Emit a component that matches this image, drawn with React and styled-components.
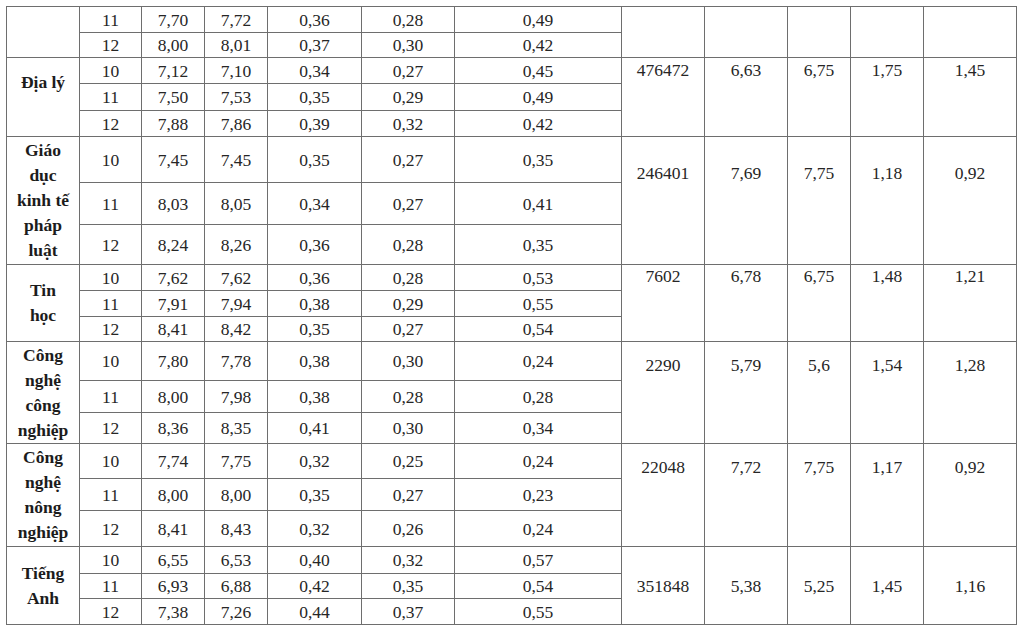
import React from "react";
import styled, { createGlobalStyle } from "styled-components";

const SERIF = `"Liberation Serif", "Times New Roman", Times, serif`;

const Global = createGlobalStyle`
  html, body { margin: 0; padding: 0; background: #fff; }
  body { font-family: ${SERIF}; color: #222; }
`;

const Page = styled.div`
  padding: 6px 0 0 6px;
  width: 1024px;
  height: 630px;
  box-sizing: border-box;
  overflow: hidden;
  background: #fff;
`;

const colWidths = [72, 61, 62, 62, 93, 92, 166, 82, 82, 62, 72, 92];

const Grid = styled.div`
  display: grid;
  grid-template-columns: ${colWidths.map((w) => `${w}px`).join(" ")};
  grid-template-rows: ${(p) => p.$rows.map((h) => `${h}px`).join(" ")};
  gap: 1px;
  padding: 1px;
  width: max-content;
  background: #6e6e6e;
`;

const Cell = styled.div`
  background: #fff;
  display: flex;
  align-items: center;
  justify-content: center;
  font-family: ${SERIF};
  font-size: 17.5px;
  line-height: 22px;
  color: #262626;
  white-space: nowrap;
`;

const Subject = styled(Cell)`
  grid-row: span ${(p) => p.$span};
  flex-direction: column;
  justify-content: ${(p) => (p.$top ? "flex-start" : "center")};
  padding-top: ${(p) => p.$pt || 0}px;
  font-weight: bold;
  line-height: 25px;
  color: #1c1c1c;
`;

const Stat = styled(Cell)`
  grid-row: span ${(p) => p.$span};
  align-items: ${(p) => (p.$middle ? "center" : "flex-start")};
  padding-top: ${(p) => p.$pt || 0}px;
`;

const groups = [
  {
    subject: [],
    rows: [
      ["11", "7,70", "7,72", "0,36", "0,28", "0,49"],
      ["12", "8,00", "8,01", "0,37", "0,30", "0,42"],
    ],
    heights: [25, 24],
    stats: ["", "", "", "", ""],
  },
  {
    subject: ["Địa lý"],
    sTop: true,
    sPt: 12,
    rows: [
      ["10", "7,12", "7,10", "0,34", "0,27", "0,45"],
      ["11", "7,50", "7,53", "0,35", "0,29", "0,49"],
      ["12", "7,88", "7,86", "0,39", "0,32", "0,42"],
    ],
    heights: [25, 26, 25],
    stats: ["476472", "6,63", "6,75", "1,75", "1,45"],
    pt: 1,
  },
  {
    subject: ["Giáo", "dục", "kinh tế", "pháp", "luật"],
    rows: [
      ["10", "7,45", "7,45", "0,35", "0,27", "0,35"],
      ["11", "8,03", "8,05", "0,34", "0,27", "0,41"],
      ["12", "8,24", "8,26", "0,36", "0,28", "0,35"],
    ],
    heights: [45, 41, 39],
    stats: ["246401", "7,69", "7,75", "1,18", "0,92"],
    pt: 25,
  },
  {
    subject: ["Tin", "học"],
    rows: [
      ["10", "7,62", "7,62", "0,36", "0,28", "0,53"],
      ["11", "7,91", "7,94", "0,38", "0,29", "0,55"],
      ["12", "8,41", "8,42", "0,35", "0,27", "0,54"],
    ],
    heights: [25, 25, 24],
    stats: ["7602", "6,78", "6,75", "1,48", "1,21"],
    pt: 0,
  },
  {
    subject: ["Công", "nghệ", "công", "nghiệp"],
    rows: [
      ["10", "7,80", "7,78", "0,38", "0,30", "0,24"],
      ["11", "8,00", "7,98", "0,38", "0,28", "0,28"],
      ["12", "8,36", "8,35", "0,41", "0,30", "0,34"],
    ],
    heights: [38, 31, 30],
    stats: ["2290", "5,79", "5,6", "1,54", "1,28"],
    pt: 12,
  },
  {
    subject: ["Công", "nghệ", "nông", "nghiệp"],
    rows: [
      ["10", "7,74", "7,75", "0,32", "0,25", "0,24"],
      ["11", "8,00", "8,00", "0,35", "0,27", "0,23"],
      ["12", "8,41", "8,43", "0,32", "0,26", "0,24"],
    ],
    heights: [34, 31, 35],
    stats: ["22048", "7,72", "7,75", "1,17", "0,92"],
    pt: 12,
  },
  {
    subject: ["Tiếng", "Anh"],
    rows: [
      ["10", "6,55", "6,53", "0,40", "0,32", "0,57"],
      ["11", "6,93", "6,88", "0,42", "0,35", "0,54"],
      ["12", "7,38", "7,26", "0,44", "0,37", "0,55"],
    ],
    heights: [26, 24, 25],
    stats: ["351848", "5,38", "5,25", "1,45", "1,16"],
    middle: true,
    pt: 0,
  },
];

const rowHeights = groups.flatMap((g) => g.heights);

export default function App() {
  return (
    <Page>
      <Global />
      <Grid $rows={rowHeights}>
        {groups.map((g, gi) =>
          g.rows.map((r, ri) => (
            <React.Fragment key={`${gi}-${ri}`}>
              {ri === 0 && (
                <Subject $span={g.rows.length} $top={g.sTop} $pt={g.sPt}>
                  {g.subject.map((line, li) => (
                    <span key={li}>{line}</span>
                  ))}
                </Subject>
              )}
              {r.map((v, vi) => (
                <Cell key={vi}>{v}</Cell>
              ))}
              {ri === 0 &&
                g.stats.map((s, si) => (
                  <Stat key={`s${si}`} $span={g.rows.length} $middle={g.middle} $pt={g.pt}>
                    {s}
                  </Stat>
                ))}
            </React.Fragment>
          ))
        )}
      </Grid>
    </Page>
  );
}
